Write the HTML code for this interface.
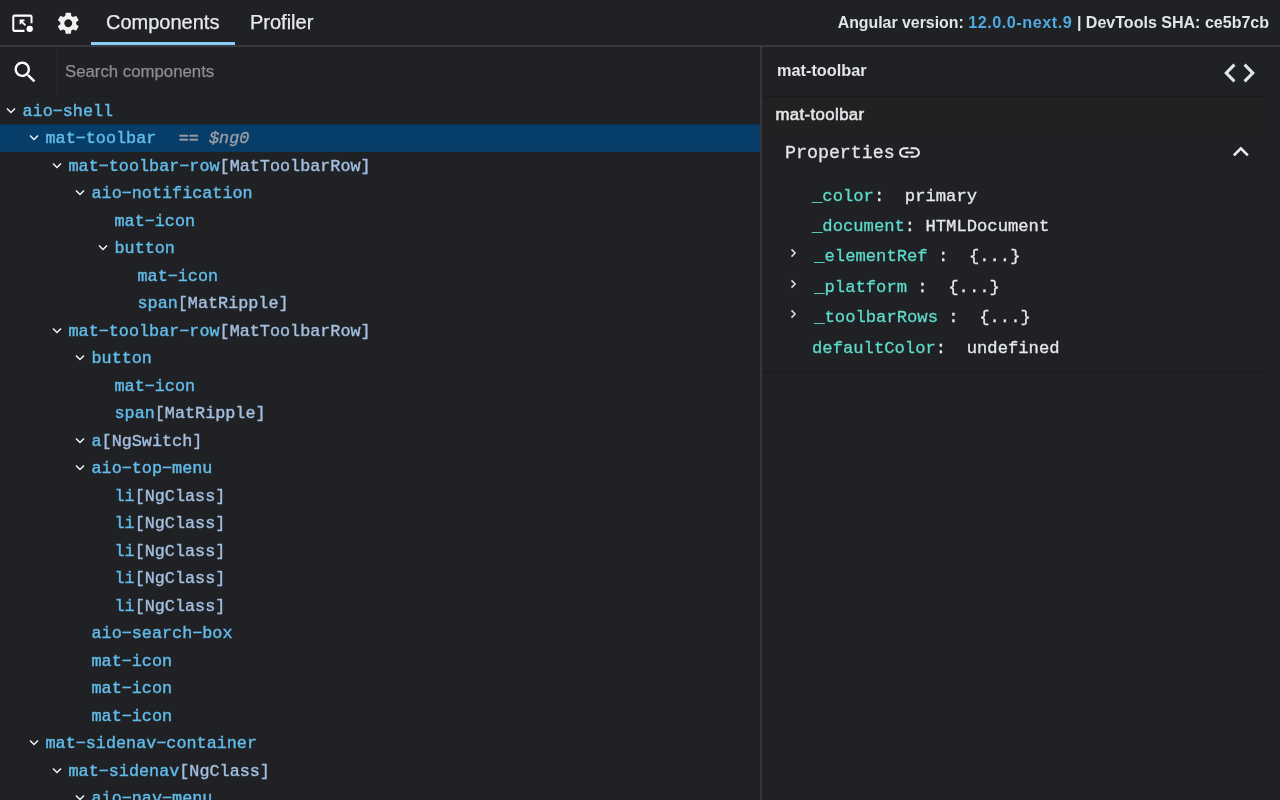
<!DOCTYPE html>
<html>
<head>
<meta charset="utf-8">
<style>
*{box-sizing:border-box;margin:0;padding:0}
html,body{width:1280px;height:800px;overflow:hidden;background:#202124;color:#e8eaed;font-family:"Liberation Sans",sans-serif}
#top{position:absolute;left:0;top:0;width:1280px;height:47px;border-bottom:2px solid #38393c}
.tab{-webkit-text-stroke:0.25px;position:absolute;top:0;height:45px;font-size:20px;line-height:44px;color:#e8eaed}
#tab1{left:106px}
#tab2{left:250px}
#ink{position:absolute;left:91px;top:42px;width:144px;height:3px;background:#8ccdf7}
#ver{position:absolute;right:11px;top:0;height:45px;line-height:45px;font-size:16.25px;font-weight:bold;color:#e3e5e8;white-space:nowrap}
.v{position:absolute;top:0;height:45px;line-height:45px;font-size:16.25px;font-weight:bold;color:#e1e4e9;white-space:nowrap}
#left{position:absolute;left:0;top:46px;width:761px;height:754px;overflow:hidden}
#search{position:absolute;left:0;top:0;width:761px;height:51px;border-bottom:1px solid #1c1d20}
#search .div{position:absolute;left:56px;top:0;width:1px;height:50px;background:#25262a}
#search .ph{position:absolute;left:65px;top:1px;line-height:50px;font-size:16.8px;color:#8e8e90;-webkit-text-stroke:0.25px}
#tree{position:absolute;left:0;top:50px;width:761px;font-family:"Liberation Mono",monospace;font-size:16.8px;color:#62bcea;-webkit-text-stroke:0.4px}
.r{position:absolute;left:0;width:760.5px;height:27.5px;line-height:28.5px;white-space:nowrap}
.r.sel{background:none}
.r b{font-weight:normal;color:#a3bfe0}
.r i{color:#9a9ca0;font-style:italic;margin-left:22.5px}
.r svg{position:absolute;top:9.25px}
#split{position:absolute;left:760px;top:46px;width:2px;height:754px;background:#38383a}
#right{position:absolute;left:763px;top:46px;width:517px;height:754px}
#rhead{position:absolute;left:0;top:0;width:517px;height:50px}
#rhead .t{position:absolute;left:14px;top:-1px;line-height:50px;font-size:16.3px;font-weight:bold;color:#e3e5e8}
#rsub{position:absolute;left:12.5px;top:58.5px;font-size:16.8px;letter-spacing:0.38px;-webkit-text-stroke:0.55px;line-height:20px;color:#e3e5e8}
#props{position:absolute;left:0;top:0;font-family:"Liberation Mono",monospace;font-size:17.2px;color:#e6e8eb;-webkit-text-stroke:0.3px}
.p{position:absolute;white-space:nowrap;line-height:24px}
.p u{text-decoration:none;color:#5edaca}
svg.ic{position:absolute;fill:#e8eaed}
#sub{position:absolute;left:-1px;top:50px;width:507px;height:38px;background:#212121;border-top:1px solid #1b1b1c}
#panel{position:absolute;left:-1px;top:324.5px;width:507px;height:2px;background:linear-gradient(#1a1b1d,#1e1f22)}
#ptitle{position:absolute;left:22px;top:95.2px;-webkit-text-stroke:0.3px;font-family:"Liberation Mono",monospace;font-size:18.3px;line-height:24px;color:#e3e5e8}
</style>
</head>
<body><div id="root" style="position:absolute;left:0;top:0;width:1280px;height:800px;will-change:transform">
<div id="top">
  <svg class="ic" style="left:0.5px;top:0;fill:#fff" width="50" height="45" viewBox="0 0 50 45"><path transform="translate(9.244 10.276) scale(1.013 1.081)" d="M20 12V6H4v12h10v2H4c-1.1 0-2-.9-2-2V6c0-1.1.9-2 2-2h16c1.1 0 2 .9 2 2v6h-2z"/><circle cx="28.7" cy="28.87" r="3.2"/><path transform="translate(10.84 11.64) scale(0.97)" d="M8 8h5v1.8H11.1l3.6 3.6-1.3 1.3L9.8 11.1V13H8z"/></svg>
  <svg class="ic" style="left:54.75px;top:10.2px;fill:#f1f1f2" width="26.5" height="26.5" viewBox="0 0 24 24"><path d="M19.14,12.94c0.04-0.3,0.06-0.61,0.06-0.94c0-0.32-0.02-0.64-0.07-0.94l2.03-1.58c0.18-0.14,0.23-0.41,0.12-0.61 l-1.92-3.32c-0.12-0.22-0.37-0.29-0.59-0.22l-2.39,0.96c-0.5-0.38-1.03-0.7-1.62-0.94L14.4,2.81c-0.04-0.24-0.24-0.41-0.48-0.41 h-3.84c-0.24,0-0.43,0.17-0.47,0.41L9.25,5.35C8.66,5.59,8.12,5.92,7.63,6.29L5.24,5.33c-0.22-0.08-0.47,0-0.59,0.22L2.74,8.87 C2.62,9.08,2.66,9.34,2.86,9.48l2.03,1.58C4.84,11.36,4.8,11.69,4.8,12s0.02,0.64,0.07,0.94l-2.03,1.58 c-0.18,0.14-0.23,0.41-0.12,0.61l1.92,3.32c0.12,0.22,0.37,0.29,0.59,0.22l2.39-0.96c0.5,0.38,1.03,0.7,1.62,0.94l0.36,2.54 c0.05,0.24,0.24,0.41,0.48,0.41h3.84c0.24,0,0.44-0.17,0.47-0.41l0.36-2.54c0.59-0.24,1.13-0.56,1.62-0.94l2.39,0.96 c0.22,0.08,0.47,0,0.59-0.22l1.92-3.32c0.12-0.22,0.07-0.47-0.12-0.61L19.14,12.94z M12,15.6c-1.98,0-3.6-1.62-3.6-3.6 s1.62-3.6,3.6-3.6s3.6,1.62,3.6,3.6S13.98,15.6,12,15.6z"/></svg>
  <div class="tab" id="tab1">Components</div>
  <div class="tab" id="tab2">Profiler</div>
  <div id="ink"></div>
  <div class="v" style="left:837.7px;font-size:15.86px">Angular version:</div><div class="v" style="left:968.2px;color:#50aae0;letter-spacing:0.5px">12.0.0-next.9</div><div class="v" style="left:1076.9px;font-size:16.04px">| DevTools SHA: ce5b7cb</div>
</div>
<div id="left">
  <div id="search"><svg class="ic" style="left:11.2px;top:12px;fill:#fff" width="28.5" height="28.5" viewBox="0 0 24 24"><path d="M15.5 14h-.79l-.28-.27C15.41 12.59 16 11.11 16 9.5 16 5.91 13.09 3 9.5 3S3 5.91 3 9.5 5.91 16 9.5 16c1.61 0 3.09-.59 4.23-1.57l.27.28v.79l5 4.99L20.49 19l-4.99-5zm-6 0C7.01 14 5 11.99 5 9.5S7.01 5 9.5 5 14 7.01 14 9.5 11.99 14 9.5 14z"/></svg><div class="div"></div><div class="ph">Search components</div></div>
  <div id="tree">
<svg style="position:absolute;left:0;top:0" width="761" height="200"><rect x="0" y="28.4" width="760.4" height="27.5" fill="#073d69"/></svg>
<div class="r" style="top:1.55px;padding-left:22.5px"><svg style="left:6.0px" width="10" height="8" viewBox="0 0 10 8"><path d="M1 1.5 L5 5.5 L9 1.5" fill="none" stroke="#f4f5f6" stroke-width="1.5"/></svg>aio&#x2212;shell</div>
<div class="r sel" style="top:29.05px;padding-left:45.5px"><svg style="left:29.0px" width="10" height="8" viewBox="0 0 10 8"><path d="M1 1.5 L5 5.5 L9 1.5" fill="none" stroke="#f4f5f6" stroke-width="1.5"/></svg>mat&#x2212;toolbar<i>== $ng0</i></div>
<div class="r" style="top:56.55px;padding-left:68.5px"><svg style="left:52.0px" width="10" height="8" viewBox="0 0 10 8"><path d="M1 1.5 L5 5.5 L9 1.5" fill="none" stroke="#f4f5f6" stroke-width="1.5"/></svg>mat&#x2212;toolbar&#x2212;row<b>[MatToolbarRow]</b></div>
<div class="r" style="top:84.05px;padding-left:91.5px"><svg style="left:75.0px" width="10" height="8" viewBox="0 0 10 8"><path d="M1 1.5 L5 5.5 L9 1.5" fill="none" stroke="#f4f5f6" stroke-width="1.5"/></svg>aio&#x2212;notification</div>
<div class="r" style="top:111.55px;padding-left:114.5px">mat&#x2212;icon</div>
<div class="r" style="top:139.05px;padding-left:114.5px"><svg style="left:98.0px" width="10" height="8" viewBox="0 0 10 8"><path d="M1 1.5 L5 5.5 L9 1.5" fill="none" stroke="#f4f5f6" stroke-width="1.5"/></svg>button</div>
<div class="r" style="top:166.55px;padding-left:137.5px">mat&#x2212;icon</div>
<div class="r" style="top:194.05px;padding-left:137.5px">span<b>[MatRipple]</b></div>
<div class="r" style="top:221.55px;padding-left:68.5px"><svg style="left:52.0px" width="10" height="8" viewBox="0 0 10 8"><path d="M1 1.5 L5 5.5 L9 1.5" fill="none" stroke="#f4f5f6" stroke-width="1.5"/></svg>mat&#x2212;toolbar&#x2212;row<b>[MatToolbarRow]</b></div>
<div class="r" style="top:249.05px;padding-left:91.5px"><svg style="left:75.0px" width="10" height="8" viewBox="0 0 10 8"><path d="M1 1.5 L5 5.5 L9 1.5" fill="none" stroke="#f4f5f6" stroke-width="1.5"/></svg>button</div>
<div class="r" style="top:276.55px;padding-left:114.5px">mat&#x2212;icon</div>
<div class="r" style="top:304.05px;padding-left:114.5px">span<b>[MatRipple]</b></div>
<div class="r" style="top:331.55px;padding-left:91.5px"><svg style="left:75.0px" width="10" height="8" viewBox="0 0 10 8"><path d="M1 1.5 L5 5.5 L9 1.5" fill="none" stroke="#f4f5f6" stroke-width="1.5"/></svg>a<b>[NgSwitch]</b></div>
<div class="r" style="top:359.05px;padding-left:91.5px"><svg style="left:75.0px" width="10" height="8" viewBox="0 0 10 8"><path d="M1 1.5 L5 5.5 L9 1.5" fill="none" stroke="#f4f5f6" stroke-width="1.5"/></svg>aio&#x2212;top&#x2212;menu</div>
<div class="r" style="top:386.55px;padding-left:114.5px">li<b>[NgClass]</b></div>
<div class="r" style="top:414.05px;padding-left:114.5px">li<b>[NgClass]</b></div>
<div class="r" style="top:441.55px;padding-left:114.5px">li<b>[NgClass]</b></div>
<div class="r" style="top:469.05px;padding-left:114.5px">li<b>[NgClass]</b></div>
<div class="r" style="top:496.55px;padding-left:114.5px">li<b>[NgClass]</b></div>
<div class="r" style="top:524.05px;padding-left:91.5px">aio&#x2212;search&#x2212;box</div>
<div class="r" style="top:551.55px;padding-left:91.5px">mat&#x2212;icon</div>
<div class="r" style="top:579.05px;padding-left:91.5px">mat&#x2212;icon</div>
<div class="r" style="top:606.55px;padding-left:91.5px">mat&#x2212;icon</div>
<div class="r" style="top:634.05px;padding-left:45.5px"><svg style="left:29.0px" width="10" height="8" viewBox="0 0 10 8"><path d="M1 1.5 L5 5.5 L9 1.5" fill="none" stroke="#f4f5f6" stroke-width="1.5"/></svg>mat&#x2212;sidenav&#x2212;container</div>
<div class="r" style="top:661.55px;padding-left:68.5px"><svg style="left:52.0px" width="10" height="8" viewBox="0 0 10 8"><path d="M1 1.5 L5 5.5 L9 1.5" fill="none" stroke="#f4f5f6" stroke-width="1.5"/></svg>mat&#x2212;sidenav<b>[NgClass]</b></div>
<div class="r" style="top:689.05px;padding-left:91.5px"><svg style="left:75.0px" width="10" height="8" viewBox="0 0 10 8"><path d="M1 1.5 L5 5.5 L9 1.5" fill="none" stroke="#f4f5f6" stroke-width="1.5"/></svg>aio&#x2212;nav&#x2212;menu</div>
</div>
</div>
<div id="split"></div>
<div id="right">
  <div id="sub"></div><div id="panel"></div>
  <div id="rhead"><svg class="ic" style="left:458.03px;top:7.7px;fill:#e2e5e9" width="37" height="38" preserveAspectRatio="none" viewBox="0 0 24 24"><path d="M9.4 16.6L4.8 12l4.6-4.6L8 6l-6 6 6 6 1.4-1.4zm5.2 0l4.6-4.6-4.6-4.6L16 6l6 6-6 6-1.4-1.4z"/></svg><div class="t">mat-toolbar</div></div>
  <div id="rsub">mat-toolbar</div>
  <div id="ptitle">Properties</div>
  <svg class="ic" style="left:134.2px;top:94.25px" width="25" height="25" viewBox="0 0 24 24"><path d="M3.9 12c0-1.71 1.39-3.1 3.1-3.1h4V7H7c-2.76 0-5 2.24-5 5s2.24 5 5 5h4v-1.900H7c-1.71 0-3.1-1.39-3.1-3.1zM8 13h8v-2H8v2zm9-6h-4v1.900h4c1.710 0 3.100 1.390 3.100 3.100s-1.390 3.100-3.100 3.100h-4V17h4c2.760 0 5-2.240 5-5s-2.240-5-5-5z"/></svg>
  <svg class="ic" style="left:462px;top:90.100px" width="31.700" height="31.700" viewBox="0 0 24 24"><path d="M12 8l-6 6 1.410 1.410L12 10.830l4.590 4.580L18 14z"/></svg>
  <div id="props">
<div class="p" style="left:49.0px;top:138.5px"><u>_color</u>: &nbsp;primary</div>
<div class="p" style="left:49.0px;top:168.9px"><u>_document</u>: HTMLDocument</div>
<svg style="position:absolute;left:27px;top:202.20000000000002px" width="8" height="10" viewBox="0 0 8 10"><path d="M1.5 1.4 L5.1 5 L1.5 8.6" fill="none" stroke="#dfe1e5" stroke-width="1.5"/></svg><div class="p" style="left:51.2px;top:199.3px"><u>_elementRef</u> : &nbsp;{...}</div>
<svg style="position:absolute;left:27px;top:232.6px" width="8" height="10" viewBox="0 0 8 10"><path d="M1.5 1.4 L5.1 5 L1.5 8.6" fill="none" stroke="#dfe1e5" stroke-width="1.5"/></svg><div class="p" style="left:51.2px;top:229.7px"><u>_platform</u> : &nbsp;{...}</div>
<svg style="position:absolute;left:27px;top:263.0px" width="8" height="10" viewBox="0 0 8 10"><path d="M1.5 1.4 L5.1 5 L1.5 8.6" fill="none" stroke="#dfe1e5" stroke-width="1.5"/></svg><div class="p" style="left:51.2px;top:260.1px"><u>_toolbarRows</u> : &nbsp;{...}</div>
<div class="p" style="left:49.0px;top:290.5px"><u>defaultColor</u>: &nbsp;undefined</div>
</div>
</div>
</div></body>
</html>
